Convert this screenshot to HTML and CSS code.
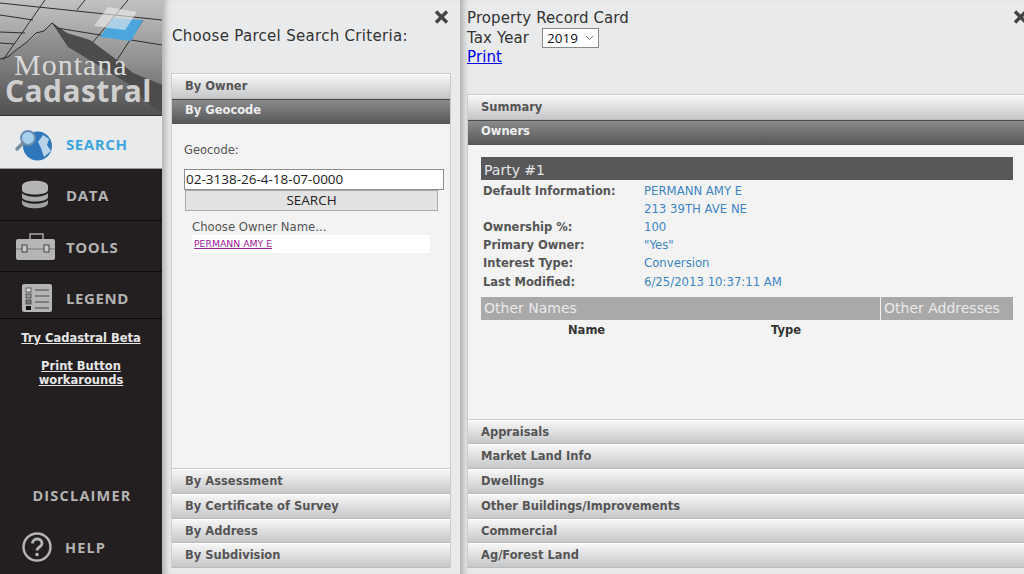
FILE: index.html
```html
<!DOCTYPE html>
<html lang="en">
<head>
<meta charset="utf-8">
<title>Montana Cadastral</title>
<link rel="stylesheet" href="styles.css">
</head>
<body>
<div class="app">
  <nav class="sidebar">
    <svg class="logo" width="162" height="116" viewBox="0 0 162 116">
      <defs>
        <linearGradient id="sky" x1="0" y1="0" x2="0" y2="1"><stop offset="0" stop-color="#c2c2c2"/><stop offset=".55" stop-color="#8e8e8e"/><stop offset="1" stop-color="#5b5b5b"/></linearGradient>
        <linearGradient id="hill" x1="0" y1="0" x2="0" y2="1"><stop offset="0" stop-color="#a0a0a0"/><stop offset="1" stop-color="#505050"/></linearGradient>
      </defs>
      <rect width="162" height="116" fill="url(#sky)"/>
      <path d="M0 59 L14 52 L28 42 L40 32 L52 23 L67 33 L90 40 L113 57 L133 73 L150 80 L162 85 V116 H0Z" fill="url(#hill)"/>
      <path d="M52 23 L67 33 L90 40 L113 57 L133 73 L150 80 L162 85 V113 L150 105 L130 85 L93 62 L68 47 L60 35Z" fill="#4c4c4c"/>
      <path d="M0 59 L8 57 L16 50 L27 42 L36 33 L44 31 L52 23 L57 27" fill="none" stroke="#2a2a2a" stroke-width="1"/>
      <g fill="none" stroke="#2e2e2e" stroke-width="1">
        <path d="M0 3 L162 20"/><path d="M0 15 L33 20"/><path d="M0 32 L25 33"/><path d="M0 43 L14 44"/>
        <path d="M45 0 L3 60"/><path d="M85 0 L77 10"/><path d="M128 0 L93 42"/><path d="M143 20 L115 63"/>
        <path d="M57 28 L162 45"/>
      </g>
      <path d="M113 18 L143 20 L131 41 L100 37Z" fill="#4aa6dc"/>
      <path d="M108 7 L137 12 L125 30 L94 26Z" fill="#efefef" fill-opacity=".6"/>
      <text class="logo-top" x="14" y="75">Montana</text>
      <text class="logo-main" x="5" y="102">Cadastral</text>
      <path d="M0 115.500 H162" stroke="#333" stroke-width="1"/>
    </svg>
    <a class="nav-item nav-active">
      <svg class="nav-icon" width="42" height="34" viewBox="0 0 42 34">
        <circle cx="23.500" cy="19" r="14.500" fill="#2f77bb"/>
        <path d="M29 8 L35 12 L33 18 L37 24 L30 30 L27 21 L24 15Z" fill="#b9d3ea"/>
        <circle cx="14" cy="11" r="7" fill="#a7cfee" stroke="#6b8fb0" stroke-width="2"/>
        <path d="M9 16 L3 22" stroke="#7a8da0" stroke-width="3.500" stroke-linecap="round"/>
      </svg>
      <span>SEARCH</span>
    </a>
    <a class="nav-item">
      <svg class="nav-icon" width="42" height="34" viewBox="0 0 42 34">
        <path d="M8 8c0-7 26-7 26 0v4c0 6-26 6-26 0Z" fill="#b4b4b4"/>
        <path d="M8 15c4 5 22 5 26 0v4c0 6-26 6-26 0Z" fill="#aaa"/>
        <path d="M8 22c4 5 22 5 26 0v3c0 7-26 7-26 0Z" fill="#a0a0a0"/>
      </svg>
      <span>DATA</span>
    </a>
    <a class="nav-item">
      <svg class="nav-icon" width="42" height="34" viewBox="0 0 42 34">
        <path d="M16 9V4H29V9" fill="none" stroke="#a8a8a8" stroke-width="1.500"/>
        <rect x="2" y="9" width="39" height="21" rx="2" fill="#b5b5b5"/>
        <path d="M2 19H41" stroke="#777" stroke-width="1"/>
        <rect x="8" y="15" width="5" height="7" fill="#c8c8c8" stroke="#444"/>
        <rect x="30" y="15" width="5" height="7" fill="#c8c8c8" stroke="#444"/>
      </svg>
      <span>TOOLS</span>
    </a>
    <a class="nav-item nav-legend">
      <svg class="nav-icon" width="42" height="34" viewBox="0 0 42 34">
        <rect x="8" y="3" width="30" height="28" rx="2" fill="#b5b5b5"/>
        <rect x="12" y="7" width="5" height="4" fill="#ddd" stroke="#444" stroke-width=".8"/>
        <rect x="12" y="13" width="5" height="4" fill="#999" stroke="#444" stroke-width=".8"/>
        <rect x="12" y="19" width="5" height="4" fill="#777" stroke="#444" stroke-width=".8"/>
        <rect x="12" y="25" width="5" height="4" fill="#111"/>
        <path d="M21 9H35M21 15H35M21 21H35M21 27H35" stroke="#444" stroke-width="1"/>
      </svg>
      <span>LEGEND</span>
    </a>
    <div class="side-links">
      <a href="#">Try Cadastral Beta</a>
      <a href="#">Print Button<br>workarounds</a>
    </div>
    <div class="side-bottom">
      <a class="disclaimer">DISCLAIMER</a>
      <a class="help">
        <svg class="nav-icon" width="32" height="32" viewBox="0 0 32 32">
          <circle cx="16" cy="16" r="13.500" fill="none" stroke="#b5b5b5" stroke-width="2.400"/>
          <path d="M11.500 12.500c0-6 9.500-6 9.500 0 0 3.500-5 3.500-5 7" fill="none" stroke="#b5b5b5" stroke-width="2.800"/>
          <circle cx="16" cy="23.500" r="1.800" fill="#b5b5b5"/>
        </svg>
        <span>HELP</span>
      </a>
    </div>
  </nav>

  <section class="panel panel-search">
    <button class="close" type="button" aria-label="Close">
      <svg width="15" height="14" viewBox="0 0 15 14"><path d="M2 1.500L13 12.500M13 1.500L2 12.500" fill="none" stroke="#444" stroke-width="3.400"/></svg>
    </button>
    <h1 class="search-title">Choose Parcel Search Criteria:</h1>
    <div class="accordion accordion-search">
      <div class="acc-head">By Owner</div>
      <div class="acc-head acc-open">By Geocode</div>
      <div class="acc-body geocode">
        <label class="geo-label">Geocode:</label>
        <input class="geo-input" type="text" value="02-3138-26-4-18-07-0000">
        <button class="geo-button" type="button">SEARCH</button>
        <div class="owner-title">Choose Owner Name...</div>
        <div class="owner-list"><a href="#">PERMANN AMY E</a></div>
      </div>
      <div class="acc-head">By Assessment</div>
      <div class="acc-head">By Certificate of Survey</div>
      <div class="acc-head">By Address</div>
      <div class="acc-head">By Subdivision</div>
    </div>
  </section>

  <section class="panel panel-record">
    <button class="close close-record" type="button" aria-label="Close">
      <svg width="15" height="14" viewBox="0 0 15 14"><path d="M2 1.500L13 12.500M13 1.500L2 12.500" fill="none" stroke="#444" stroke-width="3.400"/></svg>
    </button>
    <div class="record-top">
      <div>Property Record Card</div>
      <div class="tax-row">Tax Year
        <span class="year-select">2019<svg width="9" height="6" viewBox="0 0 9 6"><path d="M1 1L4.500 4.500L8 1" fill="none" stroke="#777" stroke-width="1"/></svg></span>
      </div>
      <a class="print" href="#">Print</a>
    </div>
    <div class="accordion accordion-record">
      <div class="acc-head">Summary</div>
      <div class="acc-head acc-open">Owners</div>
      <div class="acc-body owners">
        <div class="party">Party #1</div>
        <dl class="facts">
          <dt>Default Information:</dt><dd>PERMANN AMY E</dd>
          <dt></dt><dd>213 39TH AVE NE</dd>
          <dt>Ownership %:</dt><dd>100</dd>
          <dt>Primary Owner:</dt><dd>"Yes"</dd>
          <dt>Interest Type:</dt><dd>Conversion</dd>
          <dt>Last Modified:</dt><dd>6/25/2013 10:37:11 AM</dd>
        </dl>
        <div class="others">
          <div class="other-head">Other Names</div>
          <div class="other-head">Other Addresses</div>
        </div>
        <div class="names-cols"><span>Name</span><span>Type</span></div>
      </div>
      <div class="acc-head">Appraisals</div>
      <div class="acc-head">Market Land Info</div>
      <div class="acc-head">Dwellings</div>
      <div class="acc-head">Other Buildings/Improvements</div>
      <div class="acc-head">Commercial</div>
      <div class="acc-head">Ag/Forest Land</div>
    </div>
  </section>
</div>
</body>
</html>
```
FILE: styles.css
```css
* { box-sizing: border-box; }
html, body { margin: 0; height: 100%; overflow: hidden; }
body { font-family: "DejaVu Sans", Verdana, sans-serif; color: #333; background: #e9eaeb; }
.app { display: grid; grid-template-columns: 162px 298px 1fr; height: 574px; overflow: hidden; }

.sidebar { background: #231f20; display: flex; flex-direction: column; height: 574px; }
.logo { display: block; flex: none; }
.logo-top { font-family: "Liberation Serif", serif; font-size: 30px; fill: #d8d8d8; letter-spacing: 1px; }
.logo-main { font-family: "Open Sans", sans-serif; font-weight: 700; font-size: 30px; fill: #cfcfcf; letter-spacing: .4px; }
.nav-item { display: flex; align-items: center; height: 51.500px; padding: 2px 0 0 14px; gap: 10px; border-bottom: 1px solid #0c0a0b; font-family: "Open Sans", sans-serif; font-weight: 700; font-size: 15px; letter-spacing: .6px; color: #b3b3b3; }
.nav-icon { flex: none; }
.nav-active { background: #e9eaeb; color: #3ba6e0; height: 53px; padding-top: 3px; border-bottom: 1px solid #999; }
.nav-legend { height: 47px; padding-top: 5px; }
.side-links { display: flex; flex-direction: column; align-items: center; gap: 14px; padding-top: 12px; }
.side-links a { color: #e6e6e6; font-size: 11.500px; font-weight: 700; line-height: 14px; text-align: center; }
.side-bottom { margin-top: auto; padding-bottom: 11px; display: flex; flex-direction: column; }
.disclaimer { padding-left: 2px; font-family: "Open Sans", sans-serif; font-weight: 700; font-size: 14.500px; letter-spacing: 1.200px; color: #b3b3b3; text-align: center; margin-bottom: 26px; }
.help { display: flex; align-items: center; gap: 12px; padding-left: 21px; font-family: "Open Sans", sans-serif; font-weight: 700; font-size: 14.500px; letter-spacing: 1.100px; color: #b3b3b3; }

.panel { position: relative; height: 574px; display: flex; flex-direction: column; box-shadow: inset 8px 0 7px -5px #a9a9a9; }
.close { position: absolute; top: 10px; right: 11px; display: block; width: 15px; height: 14px; padding: 0; border: 0; background: none; line-height: 0; }
.close-record { right: -4px; }

.panel-search { padding: 0 9px 6px 9px; }
.search-title { margin: 26px 0 27px 1px; font-size: 15px; font-weight: 400; line-height: 20px; letter-spacing: .3px; color: #333; }
.panel-record { padding: 0 0 6px 7px; }
.record-top { font-size: 15px; line-height: 19px; padding-top: 9px; height: 94px; color: #333; letter-spacing: .1px; }
.tax-row { display: flex; align-items: center; gap: 13px; }
.year-select { display: inline-flex; align-items: center; justify-content: space-between; width: 57px; height: 20px; padding: 0 4px 0 4px; border: 1px solid #888; background: #fff; font: 13.500px "Open Sans", sans-serif; color: #111; letter-spacing: 0; }
.print { display: inline-block; color: #00e; text-decoration: underline; }

.accordion { flex: 1; display: flex; flex-direction: column; min-height: 0; border: 1px solid #c9cbcd; border-bottom: 0; }
.accordion-record { border-right: 0; }
.acc-head { flex: none; height: 24.750px; padding: 0 13px; font-size: 11.500px; font-weight: 700; line-height: 22.500px; color: #555; background: linear-gradient(#f6f6f6, #c6c7c9); border-top: 1px solid #fff; border-bottom: 1px solid #bbb; }
.acc-open { color: #eee; line-height: 21.500px; background: linear-gradient(#8a8b8d, #555658); border-top: 1px solid #4a4a4a; border-bottom: 0; }
.acc-body { flex: 1; min-height: 0; background: #f3f3f3; border-bottom: 1px solid #c9cbcd; }

.geocode { padding: 19px 7px 0 12px; display: flex; flex-direction: column; align-items: flex-start; font-size: 11.500px; color: #555; }
.geo-label { line-height: 15px; margin-bottom: 11px; }
.geo-input { width: 260px; height: 21px; margin: 0; padding: 0 1px; border: 1px solid #8e8e8e; background: #fff; font: 13.500px "Open Sans", sans-serif; color: #222; }
.geo-button { width: 253px; height: 21px; margin: 0 0 0 1px; padding: 0; border: 1px solid #aaa; background: #e2e2e2; font: 13.500px "Open Sans", sans-serif; color: #222; }
.owner-title { margin: 9px 0 0 8px; line-height: 14px; font-size: 11.700px; }
.owner-list { width: 238px; height: 18px; margin: 1px 0 0 8px; padding-left: 2px; background: #fff; font-size: 9.300px; line-height: 18px; }
.owner-list a { color: #a020a0; text-decoration: underline; }

.owners { padding: 12px 11px 0 13px; }
.party { height: 23px; padding-left: 3px; background: #58585a; color: #e6e6e6; font-size: 14px; line-height: 26px; }
.facts { display: grid; grid-template-columns: 161px 1fr; margin: 2px 0 6px 2px; font-size: 11.500px; line-height: 18.200px; }
.facts dt { font-weight: 700; color: #555; }
.facts dd { margin: 0; color: #3d85c6; font-size: 11.700px; }
.others { display: grid; grid-template-columns: 399px 1fr; gap: 1px; }
.other-head { height: 23px; padding-left: 3px; background: #a9a9a9; color: #e9e9e9; font-size: 14px; line-height: 23px; }
.names-cols { display: grid; grid-template-columns: 203px 1fr; padding-top: 3px; padding-left: 87px; font-size: 11.500px; font-weight: 700; line-height: 15px; color: #333; }
```
